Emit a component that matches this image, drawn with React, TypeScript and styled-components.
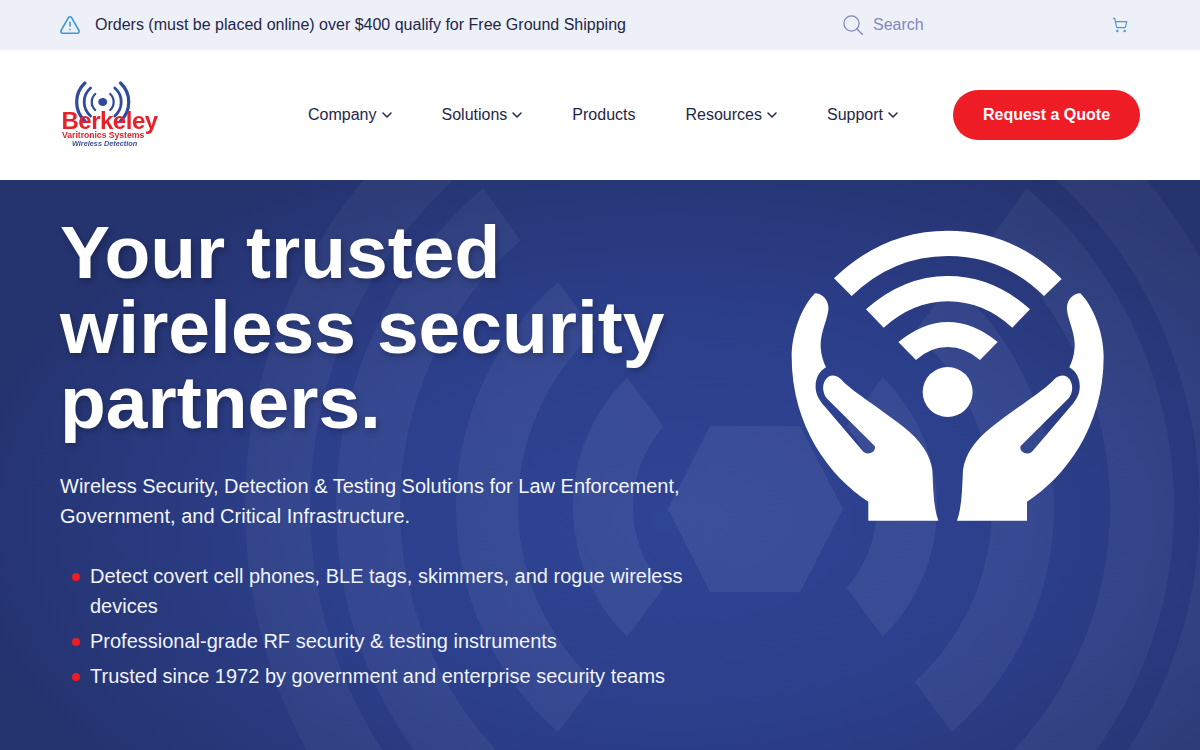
import styled, { createGlobalStyle } from "styled-components";
import { ChevronDown, ShoppingCart, TriangleAlert } from "lucide-react";

const GlobalStyle = createGlobalStyle`
  html, body {
    margin: 0;
    padding: 0;
    background: #ffffff;
    font-family: "Liberation Sans", Arial, sans-serif;
  }
  * {
    box-sizing: border-box;
  }
`;

const Page = styled.div`
  width: 1200px;
  height: 750px;
  overflow: hidden;
`;

// Top notice bar
const TopBar = styled.div`
  height: 50px;
  padding: 0 60px;
  background-color: #eef0f7;
  display: flex;
  align-items: center;
  justify-content: space-between;
`;

const Notice = styled.div`
  display: flex;
  align-items: center;
  gap: 14px;
  font-size: 16px;
  color: #1e2749;

  svg {
    margin-left: -1px;
  }
`;

const TopRight = styled.div`
  width: 297px;
  padding-right: 12px;
  display: flex;
  align-items: center;
  justify-content: space-between;
`;

const SearchBox = styled.div`
  display: flex;
  align-items: center;
  gap: 10px;
  font-size: 16px;
  color: #8088bb;
`;

// Main nav
const Header = styled.header`
  height: 130px;
  padding: 0 60px;
  background-color: #ffffff;
  display: flex;
  align-items: center;
  justify-content: space-between;
`;

const LogoMark = styled.svg`
  display: block;
  width: 100px;
  height: 70px;
  filter: blur(0.3px);
`;

const NavGroup = styled.div`
  display: flex;
  align-items: center;
  gap: 55px;
`;

const Nav = styled.nav`
  display: flex;
  align-items: center;
  gap: 50px;
`;

const NavItem = styled.a`
  display: flex;
  align-items: center;
  gap: 2px;
  font-size: 16px;
  color: #1e2749;

  svg {
    margin-right: -3px;
  }
`;

const QuoteButton = styled.a`
  width: 187px;
  height: 50px;
  border-radius: 25px;
  background-color: #ee1c25;
  color: #ffffff;
  font-size: 16px;
  font-weight: 700;
  display: flex;
  align-items: center;
  justify-content: center;
`;

// Hero
const Hero = styled.section`
  position: relative;
  height: 570px;
  padding: 35px 80px 0 60px;
  overflow: hidden;
  display: flex;
  gap: 80px;
  background: radial-gradient(ellipse 720px 400px at 56% 60%, #2e4494 0%, #2c3f8b 50%, #25336f 100%);
`;

const HeroBackdrop = styled.svg`
  position: absolute;
  inset: 0;
  width: 1200px;
  height: 570px;
`;

const HeroCopy = styled.div`
  position: relative;
  width: 630px;
  flex-shrink: 0;
`;

const Title = styled.h1`
  margin: 0 0 31px;
  font-size: 75px;
  line-height: 75px;
  font-weight: 700;
  color: #ffffff;
  text-shadow: 2px 3px 6px rgba(0, 0, 0, 0.25);
`;

const Lead = styled.p`
  margin: 0 0 30px;
  font-size: 20px;
  line-height: 30px;
  color: #f4f6fc;
`;

const Bullets = styled.ul`
  margin: 0;
  padding: 0 0 0 12px;
  list-style: none;
  display: flex;
  flex-direction: column;
  gap: 5px;
`;

const Bullet = styled.li`
  display: flex;
  gap: 10px;
  font-size: 20px;
  line-height: 30px;
  color: #f0f3fb;
`;

const Dot = styled.span`
  flex: 0 0 8px;
  height: 8px;
  margin-top: 12px;
  border-radius: 50%;
  background-color: #ee1c25;
`;

const HeroIcon = styled.svg`
  position: relative;
  display: block;
  flex-shrink: 0;
  width: 350px;
  height: 330px;
  margin-top: -5px;
`;

const CX = 755;
const CY = 327;

// one backdrop band, [inner radius, outer radius, inner tip angle, outer tip angle]
const bands = [
  [122, 182, 41.5, 45.4],
  [237, 299, 47.6, 48.8],
  [355, 419, 48.6, 49.6],
  [445, 510, 49, 50],
];

const bandPath = (ri: number, ro: number, ai: number, ao: number, side: 1 | -1) => {
  const pt = (r: number, deg: number, vert: 1 | -1) => {
    const rad = (deg * Math.PI) / 180;
    return `${(CX + side * r * Math.cos(rad)).toFixed(1)} ${(CY + vert * r * Math.sin(rad)).toFixed(1)}`;
  };
  const inward = side === 1 ? 1 : 0;
  const outward = side === 1 ? 0 : 1;
  return `M${pt(ri, ai, -1)} A${ri} ${ri} 0 0 ${inward} ${pt(ri, ai, 1)} L${pt(ro, ao, 1)} A${ro} ${ro} 0 0 ${outward} ${pt(ro, ao, -1)} Z`;
};

const navItems = [
  { label: "Company", menu: true },
  { label: "Solutions", menu: true },
  { label: "Products", menu: false },
  { label: "Resources", menu: true },
  { label: "Support", menu: true },
];

const bulletItems = [
  "Detect covert cell phones, BLE tags, skimmers, and rogue wireless devices",
  "Professional-grade RF security & testing instruments",
  "Trusted since 1972 by government and enterprise security teams",
];

const Logo = () => (
  <LogoMark viewBox="0 0 100 70">
    <g fill="none" stroke="#2f4a9c" strokeLinecap="round">
      <path d="M35.2 14 A11 11 0 0 0 35.2 30" strokeWidth="2.2" />
      <path d="M50.2 14 A11 11 0 0 1 50.2 30" strokeWidth="2.2" />
      <path d="M30.6 8 A18.5 18.5 0 0 0 30.6 36" strokeWidth="2.8" />
      <path d="M54.8 8 A18.5 18.5 0 0 1 54.8 36" strokeWidth="2.8" />
      <path d="M24.9 3 A26 26 0 0 0 24.9 41" strokeWidth="3.2" />
      <path d="M60.5 3 A26 26 0 0 1 60.5 41" strokeWidth="3.2" />
    </g>
    <ellipse cx="42.7" cy="22" rx="4.5" ry="4" fill="#2f4a9c" />
    <text x="1.5" y="49" fontFamily="Liberation Sans" fontWeight="700" fontSize="24" letterSpacing="-0.5" fill="#e8202a">
      Berkeley
    </text>
    <text x="2" y="57.5" fontFamily="Liberation Sans" fontWeight="700" fontSize="8.6" fill="#e8202a">
      Varitronics Systems
    </text>
    <text x="12" y="65.5" fontFamily="Liberation Sans" fontWeight="700" fontStyle="italic" fontSize="7.3" fill="#3b4f9d">
      Wireless Detection
    </text>
  </LogoMark>
);

const App = () => {
  return (
    <Page>
      <GlobalStyle />
      <TopBar>
        <Notice>
          <TriangleAlert size={22} color="#3c9ad2" strokeWidth={1.75} />
          Orders (must be placed online) over $400 qualify for Free Ground Shipping
        </Notice>
        <TopRight>
          <SearchBox>
            <svg width="20" height="20" viewBox="0 0 20 20" fill="none" stroke="#8088bb" strokeWidth="1.3">
              <circle cx="8.5" cy="8.5" r="7.6" />
              <path d="M14 14 L19.6 19.6" strokeLinecap="round" />
            </svg>
            Search
          </SearchBox>
          <ShoppingCart size={16} color="#4a9ad4" strokeWidth={1.75} />
        </TopRight>
      </TopBar>

      <Header>
        <Logo />
        <NavGroup>
          <Nav>
            {navItems.map((item) => (
              <NavItem key={item.label}>
                {item.label}
                {item.menu && <ChevronDown size={16} strokeWidth={2.25} />}
              </NavItem>
            ))}
          </Nav>
          <QuoteButton>Request a Quote</QuoteButton>
        </NavGroup>
      </Header>

      <Hero>
        <HeroBackdrop viewBox="0 0 1200 570">
          <defs>
            <radialGradient id="bandFade" gradientUnits="userSpaceOnUse" cx={CX} cy={CY} r="560">
              <stop offset="0" stopColor="#ffffff" stopOpacity="0.065" />
              <stop offset="1" stopColor="#ffffff" stopOpacity="0.035" />
            </radialGradient>
          </defs>
          <g fill="url(#bandFade)">
            <path d="M710 246 L800 246 L843 329 L800 412 L710 412 L668 329 Z" />
            {bands.map(([ri, ro, ai, ao]) => (
              <g key={ri}>
                <path d={bandPath(ri, ro, ai, ao, 1)} />
                <path d={bandPath(ri, ro, ai, ao, -1)} />
              </g>
            ))}
          </g>
        </HeroBackdrop>

        <HeroCopy>
          <Title>
            Your trusted
            <br />
            wireless security
            <br />
            partners.
          </Title>
          <Lead>
            Wireless Security, Detection &amp; Testing Solutions for Law Enforcement, Government, and Critical
            Infrastructure.
          </Lead>
          <Bullets>
            {bulletItems.map((text) => (
              <Bullet key={text}>
                <Dot />
                <span>{text}</span>
              </Bullet>
            ))}
          </Bullets>
        </HeroCopy>

        <HeroIcon viewBox="0 0 1050 990" fill="#ffffff">
          <path d="M192 205 Q340 62 533 62 Q730 62 875 207 L822 258 Q700 138 533 138 Q370 138 245 258 Z" />
          <path d="M288 298 Q400 198 533 198 Q670 198 780 298 L727 353 Q640 274 533 274 Q430 274 341 353 Z" />
          <path d="M385 396 Q460 336 533 336 Q610 336 683 396 L630 450 Q585 411 533 411 Q480 411 438 450 Z" />
          <circle cx="533" cy="546" r="75" />
          <g id="hand">
            <path d="M135 250 C160 250 178 275 175 300 C172 330 150 370 152 410 C153 435 160 455 168 472 C145 485 135 510 137 535 C138 555 150 575 165 590 L280 725 C295 738 320 725 314 708 L170 565 C155 545 155 515 175 500 C190 492 205 497 220 515 C250 545 330 595 400 650 C450 690 480 730 487 780 C490 840 490 890 505 932 L295 932 L295 875 C180 800 65 650 65 440 C65 370 95 290 135 250 Z" />
          </g>
          <use href="#hand" transform="translate(1066 0) scale(-1 1)" />
        </HeroIcon>
      </Hero>
    </Page>
  );
};

export default App;
